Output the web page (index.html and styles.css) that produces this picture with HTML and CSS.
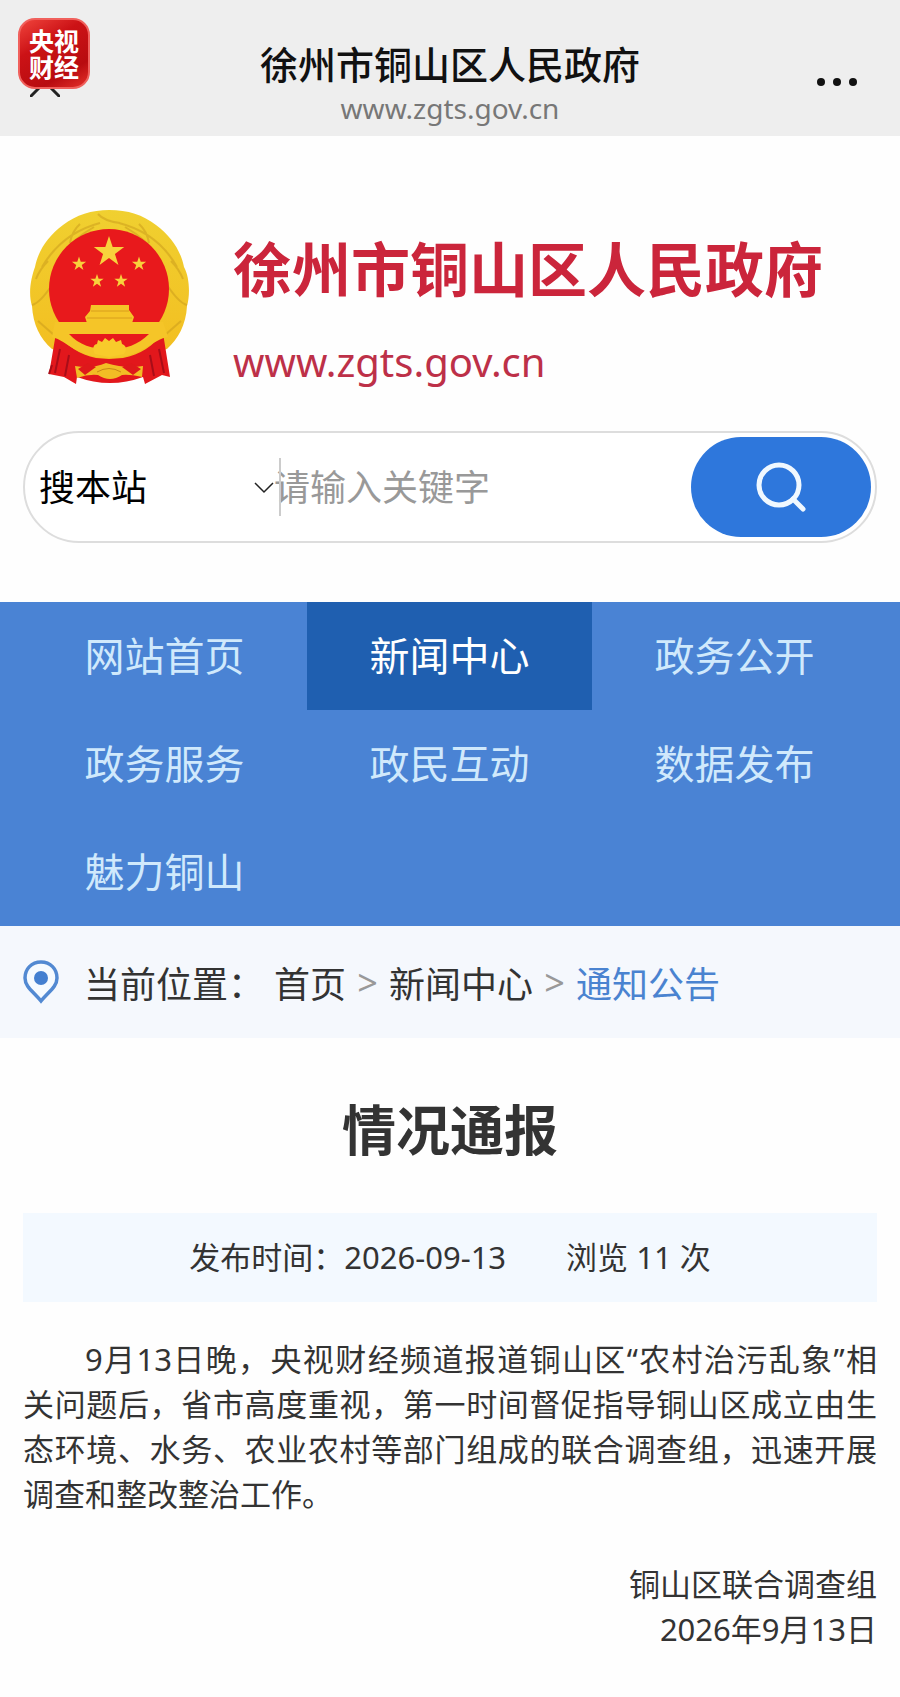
FILE: index.html
```html
<!DOCTYPE html>
<html lang="zh-CN">
<head>
    <meta charset="UTF-8">
    <meta name="viewport" content="width=device-width, initial-scale=1.0">
    <title>徐州市铜山区人民政府</title>
    <link rel="stylesheet" href="styles.css">
</head>
<body>
    <div class="topbar">
        <button class="close" aria-label="关闭">
            <svg width="30" height="30" viewBox="0 0 30 30">
                <path d="M1 1 29 29M29 1 1 29" stroke="#222" stroke-width="3" stroke-linecap="round"/>
            </svg>
        </button>
        <div class="channel-logo">央视财经</div>
        <div class="topbar-text">
            <div class="topbar-title">徐州市铜山区人民政府</div>
            <div class="topbar-url">www.zgts.gov.cn</div>
        </div>
        <button class="more" aria-label="更多">
            <svg width="40" height="8" viewBox="0 0 40 8" fill="#111">
                <circle cx="4" cy="4" r="4"/>
                <circle cx="20" cy="4" r="4"/>
                <circle cx="36" cy="4" r="4"/>
            </svg>
        </button>
    </div>

    <header class="site-header">
        <svg class="emblem" width="160" height="176" viewBox="0 0 160 176">
            <defs>
                <linearGradient id="gold" x1="0" y1="0" x2="0" y2="1">
                    <stop offset="0" stop-color="#f0d030"/>
                    <stop offset="1" stop-color="#f3bd20"/>
                </linearGradient>
                <path id="star" d="M0-10 2.3-3.1 9.5-3.1 3.7 1.2 5.9 8.1 0 3.8-5.9 8.1-3.7 1.2-9.5-3.1-2.3-3.1Z" fill="#f8d23c"/>
            </defs>
            <!-- wreath -->
            <path d="M79 1C98 1 113 6 126 16C141 27 151 42 154 58C160 69 160 87 157 97C156 116 148 130 137 140L80 156L22 140C10 130 3 115 2 97C-2 84 1 69 5 58C8 42 18 27 33 16C46 6 62 1 79 1Z" fill="url(#gold)"/>
            <g fill="none" stroke="#c99a1c" stroke-width="2" opacity=".5">
                <path d="M12 58Q32 24 70 14M6 70Q10 60 18 52M24 64Q32 36 64 18M50 15Q42 22 40 34M68 5Q74 12 90 14"/>
                <path d="M147 58Q128 24 89 14M153 70Q149 60 141 52M135 64Q127 36 95 18M109 15Q117 22 119 34"/>
                <path d="M2 96Q10 94 22 76M157 96Q149 94 137 76M8 112 24 126M151 112 135 126"/>
            </g>
            <circle cx="79" cy="80" r="60" fill="#e8191c"/>
            <!-- ribbons -->
            <path d="M26 124C36 136 50 146 66 149L79 150L93 149C110 146 124 136 133 124L140 168L132 166L115 175L113 168Q80 180 47 168L46 175L34 168L19 165Z" fill="#e2171c"/>
            <path d="M30 140 25 164M39 146 35 167M129 140 134 164M120 146 124 167M22 156 19 165" stroke="#a90d18" stroke-width="2" fill="none"/>
            <!-- gear and grain ears -->
            <path d="M25 113H133L138 128C122 130 112 149 79 149C47 149 38 132 22 128Z" fill="#f5c528"/>
            <path d="M39 125H119C108 136 96 140 79 140S49 136 39 125Z" fill="#e8191c"/>
            <path d="M65 145C61 138 65 135 67 135L68 131L72 133L75 129L79 132L83 129L86 133L91 131L92 135C95 136 98 139 94 145L79 148Z" fill="#f8cb2b"/>
            <path d="M45 157Q62 160 76 154Q96 160 113 157L112 168Q99 165 92 166Q80 174 68 166Q58 165 47 169Z" fill="#f2bd25"/>
            <path d="M67 163Q79 156 91 163" stroke="#c88815" fill="none"/>
            <path d="M48 160 58 154 66 158 55 166Z" fill="#de181b"/>
            <path d="M111 160 101 154 92 158 103 166Z" fill="#de181b"/>
            <!-- gate tower -->
            <path d="M61 96H99V101L104 108L102 114H132V120H26V114H57L55 108L60 102Z" fill="#f5c528"/>
            <path d="M61 102H99M57 109H102" stroke="#d99e1c" stroke-width="1" fill="none"/>
            <use href="#star" transform="translate(79 43) scale(1.6)"/>
            <use href="#star" transform="translate(49 55) scale(.75)"/>
            <use href="#star" transform="translate(109 55) scale(.75)"/>
            <use href="#star" transform="translate(67 72) scale(.7)"/>
            <use href="#star" transform="translate(91 72) scale(.7)"/>
        </svg>
        <div class="site-name">
            <h1>徐州市铜山区人民政府</h1>
            <a href="#">www.zgts.gov.cn</a>
        </div>
    </header>

    <form class="search">
        <div class="search-scope">
            <select aria-label="搜索范围">
                <option>搜本站</option>
            </select>
            <svg class="chevron" width="20" height="12" viewBox="0 0 20 12">
                <path d="M1 1 10 10 19 1" fill="none" stroke="#222" stroke-width="1.5"/>
            </svg>
        </div>
        <input type="text" placeholder="请输入关键字" aria-label="关键字">
        <button type="submit" aria-label="搜索">
            <svg width="52" height="52" viewBox="0 0 52 52" fill="none" stroke="#f0f8ff" stroke-width="5">
                <circle cx="24" cy="24" r="20"/>
                <path d="M38 38 48 48" stroke-linecap="round"/>
            </svg>
        </button>
    </form>

    <nav class="main-nav">
        <a href="#">网站首页</a>
        <a href="#" class="active">新闻中心</a>
        <a href="#">政务公开</a>
        <a href="#">政务服务</a>
        <a href="#">政民互动</a>
        <a href="#">数据发布</a>
        <a href="#">魅力铜山</a>
    </nav>

    <div class="breadcrumb">
        <svg class="pin" width="36" height="44" viewBox="0 0 36 44">
            <path d="M18 2C8.500 2 2 9 2 18C2 27 11 32 18 41C25 32 34 27 34 18C34 9 27.500 2 18 2Z" fill="#f5faff" stroke="#5289d2" stroke-width="3.500"/>
            <circle cx="18" cy="18" r="7" fill="#437fd0"/>
        </svg>
        <span class="label">当前位置：</span>
        <a href="#">首页</a>
        <span class="sep">&gt;</span>
        <a href="#">新闻中心</a>
        <span class="sep">&gt;</span>
        <a href="#" class="current">通知公告</a>
    </div>

    <article class="article">
        <h2>情况通报</h2>
        <div class="meta">
            <span>发布时间：2026-09-13</span>
            <span>浏览 11 次</span>
        </div>
        <p class="body-text">9月13日晚，央视财经频道报道铜山区“农村治污乱象”相关&NoBreak;问题后，省市高度重视，第一时间督促指导铜山区成立由生态环境、水务、农业农村等部门组成的联合调查组，迅速开展调查和整改整治工作。</p>
        <div class="signature">
            <p>铜山区联合调查组</p>
            <p>2026年9月13日</p>
        </div>
    </article>
</body>
</html>
```
FILE: styles.css
```css
* {
    box-sizing: border-box;
}

body {
    margin: 0;
    background-color: #fefefe;
    color: #333;
    font-family: "Noto Sans", "Noto Sans CJK SC", sans-serif;
}

a {
    color: inherit;
    text-decoration: none;
}

button {
    border: none;
    padding: 0;
    background: none;
    cursor: pointer;
}

svg {
    display: block;
}

/* Browser bar */
.topbar {
    position: relative;
    display: grid;
    grid-template-columns: 1fr auto 1fr;
    align-items: center;
    height: 136px;
    padding: 28px 43px 0;
    background-color: #eee;
}

.close {
    justify-self: start;
    margin-left: -13px;
}

.more {
    justify-self: end;
}

.channel-logo {
    position: absolute;
    top: 18px;
    left: 18px;
    width: 72px;
    height: 71px;
    padding: 8px 9px;
    border: 2px solid #f0605c;
    border-radius: 17px;
    background: linear-gradient(150deg, #f0443c, #cc1216 35%, #b80c10 75%, #e5302a);
    color: #fff;
    font-size: 25px;
    font-weight: bold;
    line-height: 26px;
}

.topbar-text {
    padding-top: 4px;
    text-align: center;
}

.topbar-title {
    color: #111;
    font-size: 38px;
    font-weight: 500;
    line-height: 48px;
}

.topbar-url {
    color: #777;
    font-size: 28px;
    line-height: 40px;
}

/* Emblem and site name */
.site-header {
    display: flex;
    gap: 43px;
    padding: 73px 30px 46px;
}

.emblem {
    flex: none;
}

.site-name h1 {
    margin: 20px 0 29px;
    color: #cb253b;
    font-size: 59px;
    font-weight: bold;
    line-height: 80px;
    white-space: nowrap;
}

.site-name a {
    display: block;
    color: #bd3048;
    font-size: 40px;
    line-height: 47px;
}

/* Search */
.search {
    display: flex;
    align-items: center;
    height: 112px;
    margin: 0 23px 59px;
    padding: 0 4px 0 14px;
    border: 2px solid #ddd;
    border-radius: 56px;
    background-color: #fff;
}

.search-scope {
    position: relative;
    flex: none;
    width: 235px;
}

.search-scope::after {
    content: "";
    position: absolute;
    top: 0;
    right: -7px;
    width: 2px;
    height: 58px;
    background-color: #ccc;
}

.search select {
    width: 100%;
    height: 58px;
    padding: 0;
    border: none;
    appearance: none;
    background: none;
    color: #000;
    font: inherit;
    font-size: 36px;
}

.chevron {
    position: absolute;
    top: 24px;
    right: 0;
}

.search input {
    flex: 1;
    min-width: 0;
    height: 58px;
    padding: 0;
    border: none;
    background: none;
    font: inherit;
    font-size: 36px;
}

.search input::placeholder {
    color: #999;
}

.search button {
    display: grid;
    place-items: center;
    width: 180px;
    height: 100px;
    border-radius: 50px;
    background-color: #2e77dc;
}

/* Navigation */
.main-nav {
    display: grid;
    grid-template-columns: repeat(3, 1fr);
    padding: 0 23px 0 22px;
    background-color: #4a83d4;
}

.main-nav a {
    color: #d0e9fc;
    font-size: 40px;
    line-height: 108px;
    text-align: center;
}

.main-nav .active {
    background-color: #1f5fb0;
    color: #fff;
}

/* Breadcrumb */
.breadcrumb {
    display: flex;
    align-items: center;
    height: 112px;
    padding: 0 23px;
    background-color: #f5f8fd;
    font-size: 36px;
}

.breadcrumb .label {
    margin: 0 10px 0 25px;
}

.breadcrumb .sep {
    width: 43px;
    color: #999;
    text-align: center;
}

.breadcrumb .current {
    color: #4a83d0;
}

/* Article */
.article {
    padding: 52px 23px 44px;
    font-size: 31px;
    line-height: 45px;
}

.article h2 {
    margin: 0 0 43px;
    font-size: 54px;
    font-weight: bold;
    line-height: 80px;
    text-align: center;
}

.meta {
    display: flex;
    justify-content: center;
    gap: 60px;
    padding: 22px 0;
    background-color: #f3f9ff;
}

.body-text {
    margin: 35px 0 45px;
    text-align: justify;
    text-indent: 2em;
}

.signature p {
    margin: 0;
    text-align: right;
}
```
